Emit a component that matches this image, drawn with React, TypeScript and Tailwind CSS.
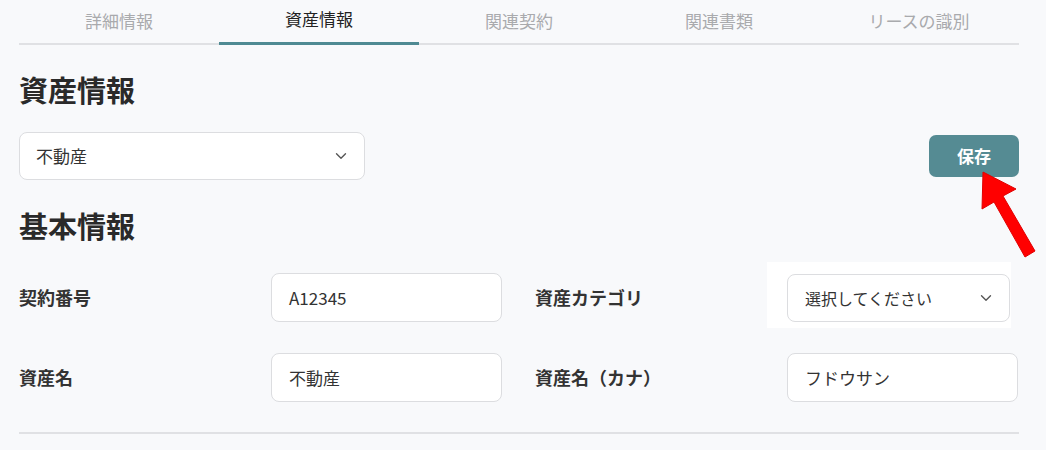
import { ChevronDown } from "lucide-react";

const tabs = ["詳細情報", "資産情報", "関連契約", "関連書類", "リースの識別"];

function Field({ children }: { children: string }) {
  return (
    <div className="h-[49px] w-[231px] bg-white border border-[#dcdde0] rounded-[8px] flex items-center pl-[17px] text-[17px] text-[#333]">
      {children}
    </div>
  );
}

export default function App() {
  return (
    <div
      className="relative w-[1046px] h-[450px] bg-[#f8f9fb] overflow-hidden"
      style={{ fontFamily: '"Noto Sans CJK JP", "Noto Sans", sans-serif' }}
    >
      <div className="ml-[19px] w-[1000px]">
        <div className="grid grid-cols-5 border-b-2 border-[#e0e1e4] h-[45px]">
          {tabs.map((t, i) => (
            <div
              key={t}
              className={
                "flex items-center justify-center text-[17px] pb-[4px] -mb-[2px] " +
                (i === 1 ? "text-[#222] border-b-[3px] border-[#4f8a93]" : "text-[#a9aaad]")
              }
            >
              {t}
            </div>
          ))}
        </div>

        <h2 className="mt-[25px] text-[29px] font-bold text-[#2a2a2a] leading-[38px]">資産情報</h2>

        <div className="mt-[24px] flex items-start justify-between">
          <div className="h-[48px] w-[346px] bg-white border border-[#dcdde0] rounded-[8px] flex items-center justify-between pl-[16px] pr-[14px] text-[17px] text-[#333]">
            <span>不動産</span>
            <ChevronDown size={18} strokeWidth={1.8} className="text-[#555]" />
          </div>
          <button className="mt-[3px] h-[42px] w-[90px] rounded-[7px] bg-[#558b93] text-white font-bold text-[17px]">
            保存
          </button>
        </div>

        <h2 className="mt-[26px] text-[29px] font-bold text-[#2a2a2a] leading-[38px]">基本情報</h2>

        <div className="mt-[29px] grid grid-cols-[252px_264px_252px_231px] gap-y-[31px] items-center">
          <div className="text-[18px] font-bold text-[#333]">契約番号</div>
          <Field>A12345</Field>
          <div className="text-[18px] font-bold text-[#333]">資産カテゴリ</div>
          <div className="-ml-[20px] -mt-[12px] -mb-[6px] pt-[12px] pb-[6px] pl-[20px] bg-white w-[244px]">
            <div className="h-[48px] w-[223px] bg-white border border-[#dcdde0] rounded-[8px] flex items-center justify-between pl-[17px] pr-[14px] text-[16px] text-[#333]">
              <span>選択してください</span>
              <ChevronDown size={18} strokeWidth={1.8} className="text-[#555]" />
            </div>
          </div>
          <div className="text-[18px] font-bold text-[#333]">資産名</div>
          <Field>不動産</Field>
          <div className="text-[18px] font-bold text-[#333]">資産名（カナ）</div>
          <Field>フドウサン</Field>
        </div>

        <div className="mt-[30px] border-b-2 border-[#e0e1e4]" />
      </div>

      <svg className="absolute left-[970px] top-[166px]" width="76" height="92" viewBox="0 0 76 92">
        <path
          d="M13 6 L46 23 L33 30 L65 85 L55 91 L24 36 L12 43 Z"
          fill="#ff0000"
          stroke="#e00000"
          strokeWidth="1"
          strokeLinejoin="round"
        />
      </svg>
    </div>
  );
}
